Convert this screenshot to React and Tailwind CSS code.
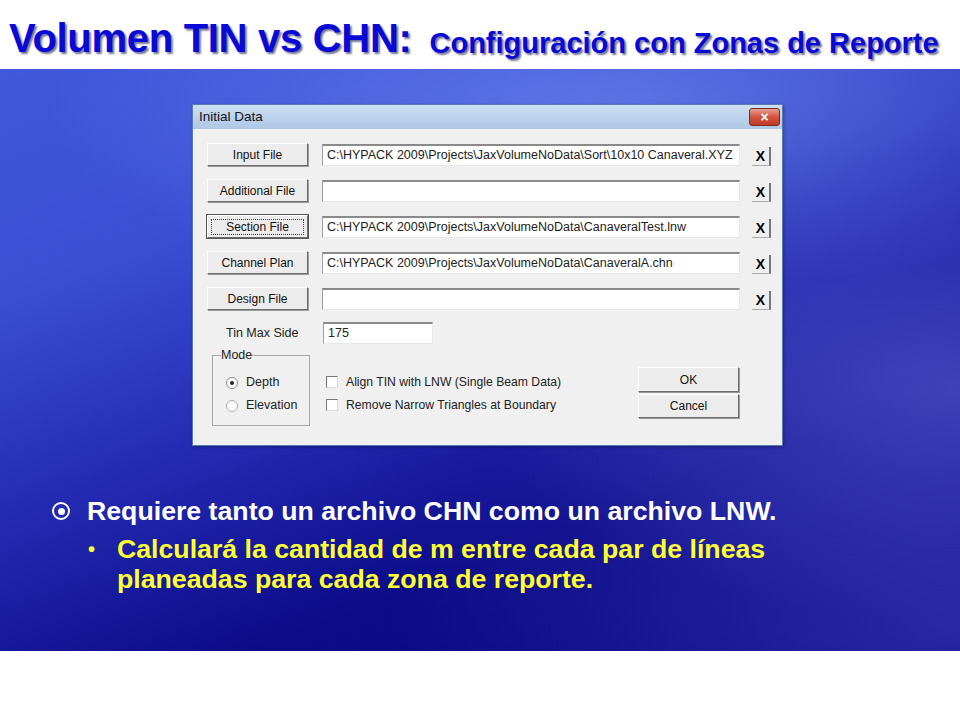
import React from "react";

const dlgFont = { fontFamily: '"Liberation Sans", Arial, sans-serif' };
const narrow = { fontFamily: '"Liberation Sans", Arial, sans-serif' };

function WinButton({ children, focused, className = "" }) {
  return (
    <div
      className={`flex items-center justify-center bg-[#ececec] text-[12px] text-[#111] border border-t-white border-l-white border-r-[#6d6d6d] border-b-[#6d6d6d] shadow-[1px_1px_0_#9a9a9a] ${focused ? "outline outline-1 outline-[#555]" : ""} ${className}`}
    >
      {focused ? (
        <span className="px-[14px] border border-dotted border-[#444] leading-[14px]">{children}</span>
      ) : (
        children
      )}
    </div>
  );
}

function Field({ value, className = "" }) {
  return (
    <div
      className={`h-[22px] bg-white border-t-2 border-l border-t-[#8a8a8a] border-l-[#a0a0a0] border-r border-b border-r-[#e8e8e8] border-b-[#e8e8e8] text-[12.5px] text-[#222] leading-[19px] pl-[4px] whitespace-nowrap overflow-hidden ${className}`}
    >
      {value}
    </div>
  );
}

function XBtn() {
  return (
    <div className="w-[19px] h-[19px] flex items-center justify-center bg-[#efefef] border-r-2 border-b border-r-[#777] border-b-[#aaa] text-[14px] font-bold leading-none text-black">
      X
    </div>
  );
}

function Row({ label, value, focused }) {
  return (
    <div className="flex items-center h-[23px]">
      <WinButton focused={focused} className="w-[101px] h-[23px]">{label}</WinButton>
      <Field value={value} className="ml-[14px] w-[418px]" />
      <div className="ml-[12px] mt-[4px]"><XBtn /></div>
    </div>
  );
}

export default function App() {
  return (
    <div className="w-[960px] h-[720px] bg-white overflow-hidden relative">
      {/* Title */}
      <div className="h-[69px] flex items-end pb-[11px] pl-[9px]" style={narrow}>
        <span className="text-[40px] font-bold text-[#0a0ad8] leading-none tracking-[-0.3px] [text-shadow:2px_2px_2px_rgba(0,0,60,0.55)]">
          Volumen TIN vs CHN:
        </span>
        <span className="ml-[18px] text-[29px] font-bold text-[#0a0ad8] leading-none [text-shadow:2px_2px_2px_rgba(0,0,60,0.55)]">
          Configuración con Zonas de Reporte
        </span>
      </div>

      {/* Blue slide area */}
      <div className="h-[582px] relative overflow-hidden bg-[linear-gradient(160deg,#4058dc_0%,#3a4ed4_25%,#2228b0_50%,#0c0c88_72%,#060478_100%)]">
        <div className="absolute inset-0 bg-[radial-gradient(ellipse_60%_30%_at_65%_8%,rgba(140,170,255,0.45),transparent)]" />
        <div className="absolute inset-0 bg-[radial-gradient(ellipse_50%_40%_at_100%_55%,rgba(110,120,230,0.5),transparent)]" />
        <div className="absolute inset-0 bg-[radial-gradient(ellipse_60%_50%_at_100%_95%,rgba(70,70,200,0.55),transparent)]" />

        {/* Dialog */}
        <div className="relative ml-[192px] mt-[35px] w-[591px] h-[342px] bg-[#f0f0f0] border border-[#5a7ab0] shadow-[1px_1px_3px_rgba(0,0,0,0.3)]" style={dlgFont}>
          <div className="h-[24px] flex items-center justify-between pl-[6px] pr-[2px] bg-[linear-gradient(180deg,#cfe0f3_0%,#bcd2ec_50%,#b0c8e6_100%)]">
            <span className="text-[13.5px] text-[#111]">Initial Data</span>
            <div className="w-[31px] h-[18px] rounded-[3px] border border-[#7a2a22] bg-[linear-gradient(180deg,#e8a192_0%,#d2533e_50%,#c03a26_100%)] flex items-center justify-center">
              <span className="text-white font-bold text-[14px] leading-none">×</span>
            </div>
          </div>

          <div className="pl-[14px] pt-[14px] flex flex-col gap-[13px]">
            <Row label="Input File" value="C:\HYPACK 2009\Projects\JaxVolumeNoData\Sort\10x10 Canaveral.XYZ" />
            <Row label="Additional File" value="" />
            <Row label="Section File" value="C:\HYPACK 2009\Projects\JaxVolumeNoData\CanaveralTest.lnw" focused />
            <Row label="Channel Plan" value="C:\HYPACK 2009\Projects\JaxVolumeNoData\CanaveralA.chn" />
            <Row label="Design File" value="" />
          </div>

          <div className="flex items-center mt-[11px] h-[23px]">
            <span className="ml-[33px] w-[97px] text-[12.5px] text-[#222] mt-[2px]">Tin Max Side</span>
            <Field value="175" className="w-[110px]" />
          </div>

          <div className="flex mt-[11px]">
            <div className="ml-[19px] w-[98px] h-[71px] border border-[#a8a8a8] relative">
              <span className="absolute -top-[8px] left-[8px] bg-[#f0f0f0] text-[12.5px] leading-[14px] text-[#222]">Mode</span>
              <div className="mt-[19px] ml-[13px] flex flex-col gap-[8px] text-[12.5px] text-[#222]">
                <div className="flex items-center gap-[8px] h-[15px]">
                  <span className="w-[12px] h-[12px] rounded-full border border-[#888] bg-white flex items-center justify-center">
                    <span className="w-[4px] h-[4px] rounded-full bg-[#222]" />
                  </span>
                  Depth
                </div>
                <div className="flex items-center gap-[8px] h-[15px]">
                  <span className="w-[12px] h-[12px] rounded-full border border-[#aaa] bg-white" />
                  Elevation
                </div>
              </div>
            </div>

            <div className="ml-[16px] mt-[20px] flex flex-col gap-[9px] text-[12.2px] text-[#222]">
              <div className="flex items-center gap-[8px] h-[14px]">
                <span className="w-[12px] h-[12px] bg-white border-t border-l border-t-[#777] border-l-[#777] border-r border-b border-r-[#ddd] border-b-[#ddd]" />
                Align TIN with LNW (Single Beam Data)
              </div>
              <div className="flex items-center gap-[8px] h-[14px]">
                <span className="w-[12px] h-[12px] bg-white border-t border-l border-t-[#777] border-l-[#777] border-r border-b border-r-[#ddd] border-b-[#ddd]" />
                Remove Narrow Triangles at Boundary
              </div>
            </div>

            <div className="ml-auto mr-[43px] mt-[12px] flex flex-col gap-[2px]">
              <WinButton className="w-[101px] h-[25px] text-[12.5px]">OK</WinButton>
              <WinButton className="w-[101px] h-[24px] text-[12.5px]">Cancel</WinButton>
            </div>
          </div>
        </div>

        {/* Bullets */}
        <div className="relative mt-[50px] ml-[52px]" style={narrow}>
          <div className="flex items-center h-[30px]">
            <span className="w-[18px] h-[18px] rounded-full border-[2.5px] border-white flex items-center justify-center">
              <span className="w-[7px] h-[7px] rounded-full bg-white" />
            </span>
            <span className="ml-[17px] text-[26.7px] font-bold text-white leading-none">
              Requiere tanto un archivo CHN como un archivo LNW.
            </span>
          </div>
          <div className="flex mt-[8px] ml-[36px]">
            <span className="text-[20px] font-bold text-[#ffff33] leading-[30px] w-[29px]">•</span>
            <span className="text-[26.7px] font-bold text-[#ffff33] leading-[30px]">
              Calculará la cantidad de m entre cada par de líneas
              <br />
              planeadas para cada zona de reporte.
            </span>
          </div>
        </div>
      </div>
    </div>
  );
}
